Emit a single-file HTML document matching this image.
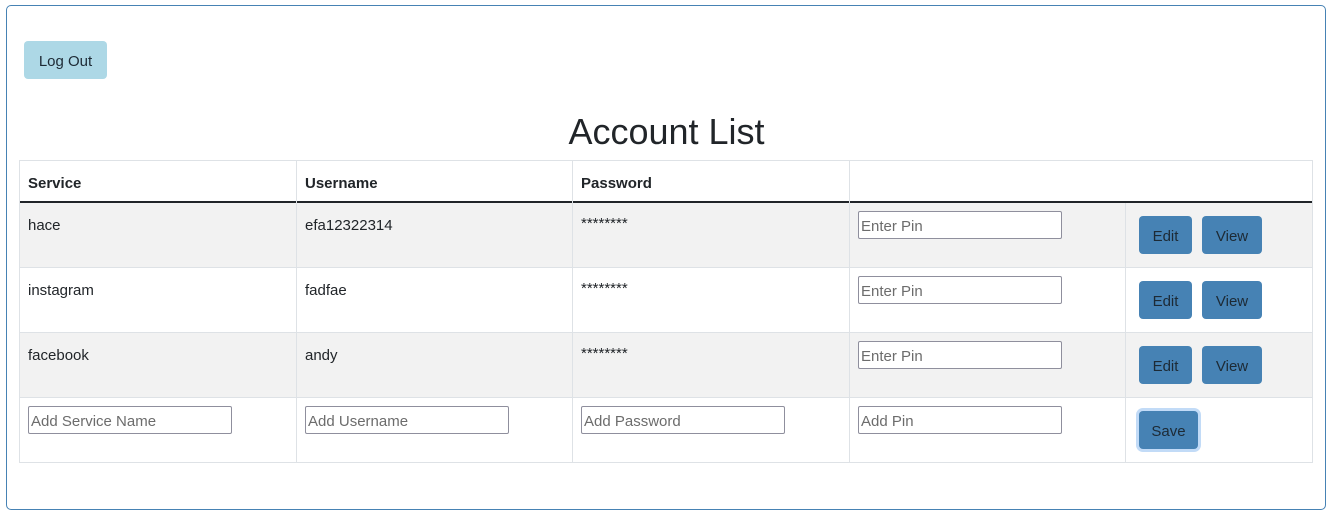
<!DOCTYPE html>
<html><head><style>
body{margin:0;width:1333px;height:516px;background:#fff;font-family:"Liberation Sans",sans-serif;color:#212529;position:relative;overflow:hidden}
.a{position:absolute}
.box{left:6px;top:5px;width:1318px;height:503px;border:1px solid #4682b4;border-radius:5px}
.btn{position:absolute;border-radius:4px;font-size:15px;display:flex;align-items:center;justify-content:center;color:#1d2a35;padding-top:2px;box-sizing:border-box}
.blue{background:#4682b4}
.inp{position:absolute;width:200px;height:26px;border:1px solid #8f8f9d;border-radius:2px;font-size:15px;color:#6c6c6c;line-height:30px;padding-left:2px;box-sizing:content-box;background:#fff}
.t{position:absolute;font-size:15px}
.hl{position:absolute;height:1px;background:#dee2e6}
.vl{position:absolute;width:1px;background:#dee2e6}
.bg{position:absolute;left:19px;width:1294px;height:65px;background:#f2f2f2}
</style></head><body>
<div class="a box"></div>
<div class="btn" style="left:24px;top:41px;width:83px;height:38px;background:#add8e6">Log Out</div>
<div class="a" style="left:0;width:1333px;top:111px;text-align:center;font-size:36px;color:#212529">Account List</div>

<div class="bg" style="top:203px"></div>
<div class="bg" style="top:333px"></div>
<div class="hl" style="left:19px;width:1294px;top:160px"></div>
<div class="a" style="left:19px;width:1294px;top:201px;height:2px;background:#212529"></div>
<div class="hl" style="left:19px;width:1294px;top:267px"></div>
<div class="hl" style="left:19px;width:1294px;top:332px"></div>
<div class="hl" style="left:19px;width:1294px;top:397px"></div>
<div class="hl" style="left:19px;width:1294px;top:462px"></div>
<div class="vl" style="left:19px;top:160px;height:303px"></div>
<div class="vl" style="left:296px;top:160px;height:303px"></div>
<div class="vl" style="left:572px;top:160px;height:303px"></div>
<div class="vl" style="left:849px;top:160px;height:303px"></div>
<div class="vl" style="left:1125px;top:203px;height:260px"></div>
<div class="vl" style="left:1312px;top:160px;height:303px"></div>

<div class="t" style="left:28px;top:175px;font-weight:bold">Service</div>
<div class="t" style="left:305px;top:175px;font-weight:bold">Username</div>
<div class="t" style="left:581px;top:175px;font-weight:bold">Password</div>

<div class="t" style="left:28px;top:217px">hace</div>
<div class="t" style="left:305px;top:217px">efa12322314</div>
<div class="t" style="left:581px;top:215px">********</div>
<div class="t" style="left:28px;top:282px">instagram</div>
<div class="t" style="left:305px;top:282px">fadfae</div>
<div class="t" style="left:581px;top:280px">********</div>
<div class="t" style="left:28px;top:347px">facebook</div>
<div class="t" style="left:305px;top:347px">andy</div>
<div class="t" style="left:581px;top:345px">********</div>

<div class="inp" style="left:858px;top:211px">Enter Pin</div>
<div class="inp" style="left:858px;top:276px">Enter Pin</div>
<div class="inp" style="left:858px;top:341px">Enter Pin</div>
<div class="inp" style="left:28px;top:406px">Add Service Name</div>
<div class="inp" style="left:305px;top:406px">Add Username</div>
<div class="inp" style="left:581px;top:406px">Add Password</div>
<div class="inp" style="left:858px;top:406px">Add Pin</div>

<div class="btn blue" style="left:1139px;top:216px;width:53px;height:38px">Edit</div>
<div class="btn blue" style="left:1202px;top:216px;width:60px;height:38px">View</div>
<div class="btn blue" style="left:1139px;top:281px;width:53px;height:38px">Edit</div>
<div class="btn blue" style="left:1202px;top:281px;width:60px;height:38px">View</div>
<div class="btn blue" style="left:1139px;top:346px;width:53px;height:38px">Edit</div>
<div class="btn blue" style="left:1202px;top:346px;width:60px;height:38px">View</div>
<div class="btn blue" style="left:1139px;top:411px;width:59px;height:38px;box-shadow:0 0 0 3px #c2dbf7">Save</div>
</body></html>
